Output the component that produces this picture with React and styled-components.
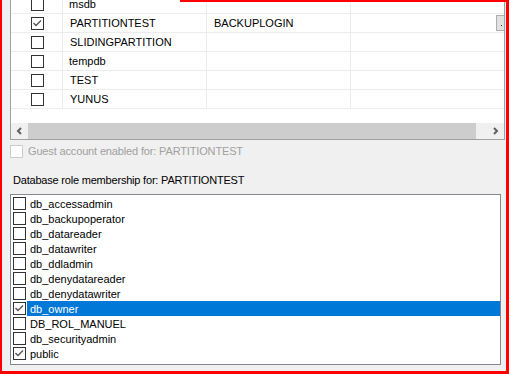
import React from "react";
import styled, { createGlobalStyle } from "styled-components";

const Global = createGlobalStyle`
  html, body { margin: 0; padding: 0; background: #f0f0f0; }
  body {
    font-family: "Liberation Sans", Arial, sans-serif;
    font-size: 11px;
    color: #000;
  }
`;

const Frame = styled.div`
  position: relative;
  width: 509px;
  height: 374px;
  box-sizing: border-box;
  border-left: 2px solid #ff0000;
  border-right: 3px solid #ff0000;
  border-bottom: 3px solid #ff0000;
  background: #f0f0f0;
  padding: 0 1px 0 8px;
  display: flex;
  flex-direction: column;
  overflow: hidden;
`;

const TopMark = styled.div`
  position: absolute;
  top: 0;
  left: 178px;
  right: 0;
  height: 2px;
  background: #ff0000;
`;

const Grid = styled.div`
  display: flex;
  flex-direction: column;
  border: 1px solid #a0a0a0;
  border-top: none;
  background: #fff;
`;

const GridViewport = styled.div`
  height: 123px;
  overflow: hidden;
  background: #fff;
`;

const GridBody = styled.div`
  margin-top: -5px;
`;

const GridRow = styled.div`
  display: flex;
  height: 19px;
  box-sizing: border-box;
  border-bottom: 1px solid #ececec;
`;

const CheckCell = styled.div`
  width: 52px;
  flex: none;
  box-sizing: border-box;
  border-right: 1px solid #ececec;
  display: flex;
  align-items: center;
  padding-left: 20px;
`;

const TextCell = styled.div`
  width: 144px;
  flex: none;
  box-sizing: border-box;
  border-right: 1px solid #ececec;
  display: flex;
  align-items: center;
  padding-left: ${(p) => (p.$lower ? 6 : 7)}px;
  white-space: nowrap;
  overflow: hidden;
`;

const LastCell = styled.div`
  flex: 1;
  display: flex;
  justify-content: flex-end;
  align-items: flex-start;
`;

const EllipsisButton = styled.span`
  margin-top: 1px;
  width: 8px;
  height: 16px;
  box-sizing: border-box;
  border: 1px solid #adadad;
  border-right: none;
  background: #e1e1e1;
  display: flex;
  align-items: flex-end;
  padding: 0 0 4px 4px;
`;

const Dot = styled.span`
  width: 1px;
  height: 1px;
  background: #222;
`;

const HScroll = styled.div`
  display: flex;
  height: 16px;
  background: #f0f0f0;
`;

const ScrollButton = styled.div`
  width: 17px;
  flex: none;
  display: flex;
  align-items: center;
  justify-content: center;
`;

const Track = styled.div`
  flex: 1;
  display: flex;
`;

const Thumb = styled.div`
  width: 448px;
  background: #cdcdcd;
`;

const Box = styled.span`
  width: 13px;
  height: 13px;
  flex: none;
  box-sizing: border-box;
  border: 1px solid ${(p) => (p.$disabled ? "#cccccc" : "#333333")};
  background: #fff;
  display: flex;
  align-items: center;
  justify-content: center;
`;

const GuestRow = styled.div`
  margin-top: 5px;
  height: 13px;
  display: flex;
  align-items: center;
  gap: 5px;
  color: #a0a0a0;
  letter-spacing: -0.15px;
  white-space: nowrap;
`;

const GuestText = styled.span`
  line-height: 13px;
  margin-top: -1px;
`;

const SectionLabel = styled.div`
  margin-top: 16px;
  padding-left: 3px;
  line-height: 13px;
  letter-spacing: -0.2px;
  white-space: nowrap;
`;

const RoleList = styled.div`
  margin-top: 7px;
  width: 491px;
  height: 171px;
  box-sizing: border-box;
  border: 1px solid #828790;
  background: #fff;
  padding: 1px 0 0 2px;
  display: flex;
  flex-direction: column;
`;

const RoleItem = styled.div`
  height: 15px;
  display: flex;
  align-items: center;
`;

const RoleLabel = styled.span`
  flex: 1;
  align-self: stretch;
  margin-left: 1px;
  padding-left: 3px;
  display: flex;
  align-items: center;
  white-space: nowrap;
  background: ${(p) => (p.$selected ? "#0078d7" : "transparent")};
  color: ${(p) => (p.$selected ? "#fff" : "#000")};
`;

const Check = () => (
  <svg width="11" height="11" viewBox="0 0 11 11">
    <polyline
      points="1.5,5 4,7.5 9,2.5"
      fill="none"
      stroke="#555"
      strokeWidth="1.4"
    />
  </svg>
);

const CheckBox = ({ checked, disabled }) => (
  <Box $disabled={disabled}>{checked ? <Check /> : null}</Box>
);

const Chevron = ({ dir }) => (
  <svg width="7" height="8" viewBox="0 0 7 8">
    <polyline
      points={dir === "left" ? "5,1 2,4 5,7" : "2,1 5,4 2,7"}
      fill="none"
      stroke="#606060"
      strokeWidth="2"
    />
  </svg>
);

const gridRows = [
  { name: "msdb", lower: true },
  { name: "PARTITIONTEST", checked: true, user: "BACKUPLOGIN", button: true },
  { name: "SLIDINGPARTITION" },
  { name: "tempdb", lower: true },
  { name: "TEST" },
  { name: "YUNUS" },
];

const roles = [
  { name: "db_accessadmin" },
  { name: "db_backupoperator" },
  { name: "db_datareader" },
  { name: "db_datawriter" },
  { name: "db_ddladmin" },
  { name: "db_denydatareader" },
  { name: "db_denydatawriter" },
  { name: "db_owner", checked: true, selected: true },
  { name: "DB_ROL_MANUEL" },
  { name: "db_securityadmin" },
  { name: "public", checked: true },
];

export default function App() {
  return (
    <>
      <Global />
      <Frame>
        <TopMark />
        <Grid>
          <GridViewport>
            <GridBody>
              {gridRows.map((r) => (
                <GridRow key={r.name}>
                  <CheckCell>
                    <CheckBox checked={r.checked} />
                  </CheckCell>
                  <TextCell $lower={r.lower}>{r.name}</TextCell>
                  <TextCell>{r.user || ""}</TextCell>
                  <LastCell>
                    {r.button ? (
                      <EllipsisButton>
                        <Dot />
                      </EllipsisButton>
                    ) : null}
                  </LastCell>
                </GridRow>
              ))}
            </GridBody>
          </GridViewport>
          <HScroll>
            <ScrollButton>
              <Chevron dir="left" />
            </ScrollButton>
            <Track>
              <Thumb />
            </Track>
            <ScrollButton>
              <Chevron dir="right" />
            </ScrollButton>
          </HScroll>
        </Grid>
        <GuestRow>
          <CheckBox disabled />
          <GuestText>Guest account enabled for: PARTITIONTEST</GuestText>
        </GuestRow>
        <SectionLabel>Database role membership for: PARTITIONTEST</SectionLabel>
        <RoleList>
          {roles.map((r) => (
            <RoleItem key={r.name}>
              <CheckBox checked={r.checked} />
              <RoleLabel $selected={r.selected}>{r.name}</RoleLabel>
            </RoleItem>
          ))}
        </RoleList>
      </Frame>
    </>
  );
}
